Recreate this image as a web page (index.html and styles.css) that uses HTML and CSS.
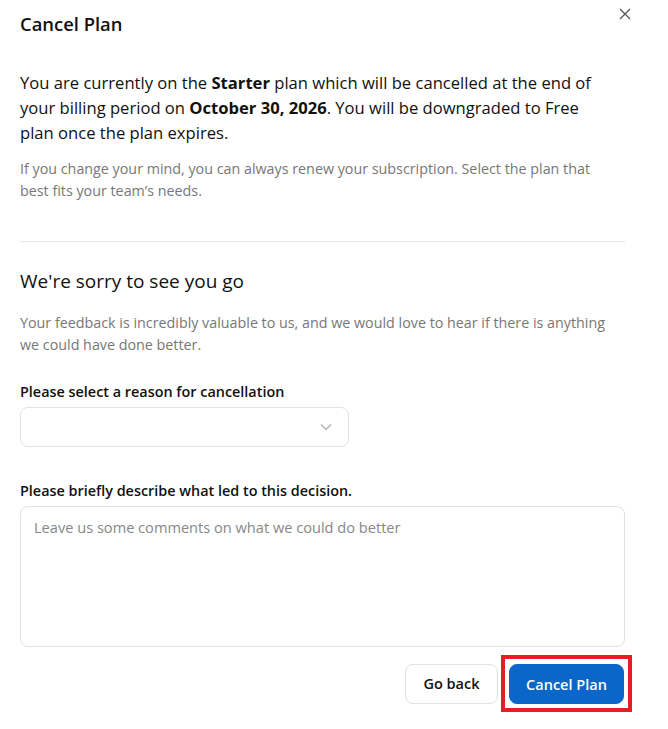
FILE: index.html
```html
<!DOCTYPE html>
<html>

<head>
    <link rel="stylesheet" href="styles.css">
</head>

<body>

    <div id="dialog">
        <div class="header">
            <h2 class="title">Cancel Plan</h2>
            <button class="close" aria-label="Close">
                <svg width="12" height="12" viewBox="0 0 12 12">
                    <path d="M1 1L11 11M11 1L1 11" stroke="#555" stroke-width="1.3" fill="none" />
                </svg>
            </button>
        </div>

        <p class="lead">You are currently on the <b>Starter</b> plan which will be cancelled at the end of
            your billing period on <b>October 30, 2026</b>. You will be downgraded to Free plan once the plan
            expires.</p>
        <p class="muted">If you change your mind, you can always renew your subscription. Select the plan that
            best fits your team’s needs.</p>

        <hr class="divider">

        <h3 class="subtitle">We're sorry to see you go</h3>
        <p class="muted">Your feedback is incredibly valuable to us, and we would love to hear if there is
            anything we could have done better.</p>

        <label class="field-label">Please select a reason for cancellation</label>
        <div class="select">
            <svg width="12" height="8" viewBox="0 0 12 8">
                <path d="M1 1.5L6 6.5L11 1.5" stroke="#aaa" stroke-width="1.2" fill="none" />
            </svg>
        </div>

        <label class="field-label second">Please briefly describe what led to this decision.</label>
        <textarea class="comments" placeholder="Leave us some comments on what we could do better"></textarea>

        <div class="actions">
            <button class="btn secondary">Go back</button>
            <div class="highlight">
                <button class="btn primary">Cancel Plan</button>
            </div>
        </div>
    </div>

</body>

</html>
```

FILE: styles.css
```css
* {
    box-sizing: border-box;
}

body {
    margin: 0px;
    padding: 0px;
    background: white;
    font-family: "Open Sans", "Liberation Sans", sans-serif;
    color: #111;
}

#dialog {
    width: 668px;
    padding: 0px 43px 0px 20px;
}

.header {
    display: flex;
    justify-content: space-between;
    align-items: flex-start;
    height: 70px;
}

.title {
    margin: 12px 0px 0px 0px;
    font-size: 18.4px;
    font-weight: 600;
    line-height: 24px;
}

.close {
    border: none;
    background: none;
    padding: 0px;
    margin: 8px -6px 0px 0px;
    width: 12px;
    height: 12px;
    line-height: 0;
}

.lead {
    margin: 0px;
    max-width: 590px;
    font-size: 16.6px;
    line-height: 25px;
}

.lead b {
    font-weight: 700;
}

.muted {
    margin: 13px 0px 0px 0px;
    max-width: 590px;
    font-size: 14.3px;
    line-height: 22px;
    color: #777;
}

.divider {
    border: none;
    border-top: 1px solid #e6e6e6;
    margin: 39px 0px 0px 0px;
}

.subtitle {
    margin: 25px 0px 0px 0px;
    font-size: 19px;
    font-weight: 400;
    line-height: 28px;
}

.subtitle + .muted {
    margin-top: 17px;
}

.field-label {
    display: block;
    margin: 26px 0px 0px 0px;
    font-size: 14.4px;
    font-weight: 600;
    line-height: 20px;
}

.field-label.second {
    margin-top: 34px;
}

.select {
    width: 329px;
    height: 40px;
    margin-top: 5px;
    border: 1px solid #e2e2e2;
    border-radius: 8px;
    display: flex;
    justify-content: flex-end;
    align-items: center;
    padding-right: 16px;
}

.comments {
    display: block;
    width: 100%;
    height: 141px;
    margin-top: 5px;
    border: 1px solid #e2e2e2;
    border-radius: 8px;
    padding: 10px 13px;
    resize: none;
    font-family: inherit;
    font-size: 14.6px;
}

.comments::placeholder {
    color: #888;
}

.actions {
    display: flex;
    justify-content: flex-end;
    align-items: center;
    gap: 3px;
    margin: 8px -7px 0px 0px;
}

.highlight {
    border: 4px solid #e81c24;
    padding: 5px 4px 4px 4px;
}

.btn {
    height: 40px;
    border-radius: 8px;
    font-family: inherit;
    font-size: 14.5px;
    font-weight: 600;
    padding: 0px 16px;
    white-space: nowrap;
}

.btn.secondary {
    background: white;
    border: 1px solid #e2e2e2;
    color: #111;
    width: 93px;
}

.btn.primary {
    background: #0a66c8;
    border: 1px solid #0a66c8;
    color: white;
    width: 115px;
}
```
